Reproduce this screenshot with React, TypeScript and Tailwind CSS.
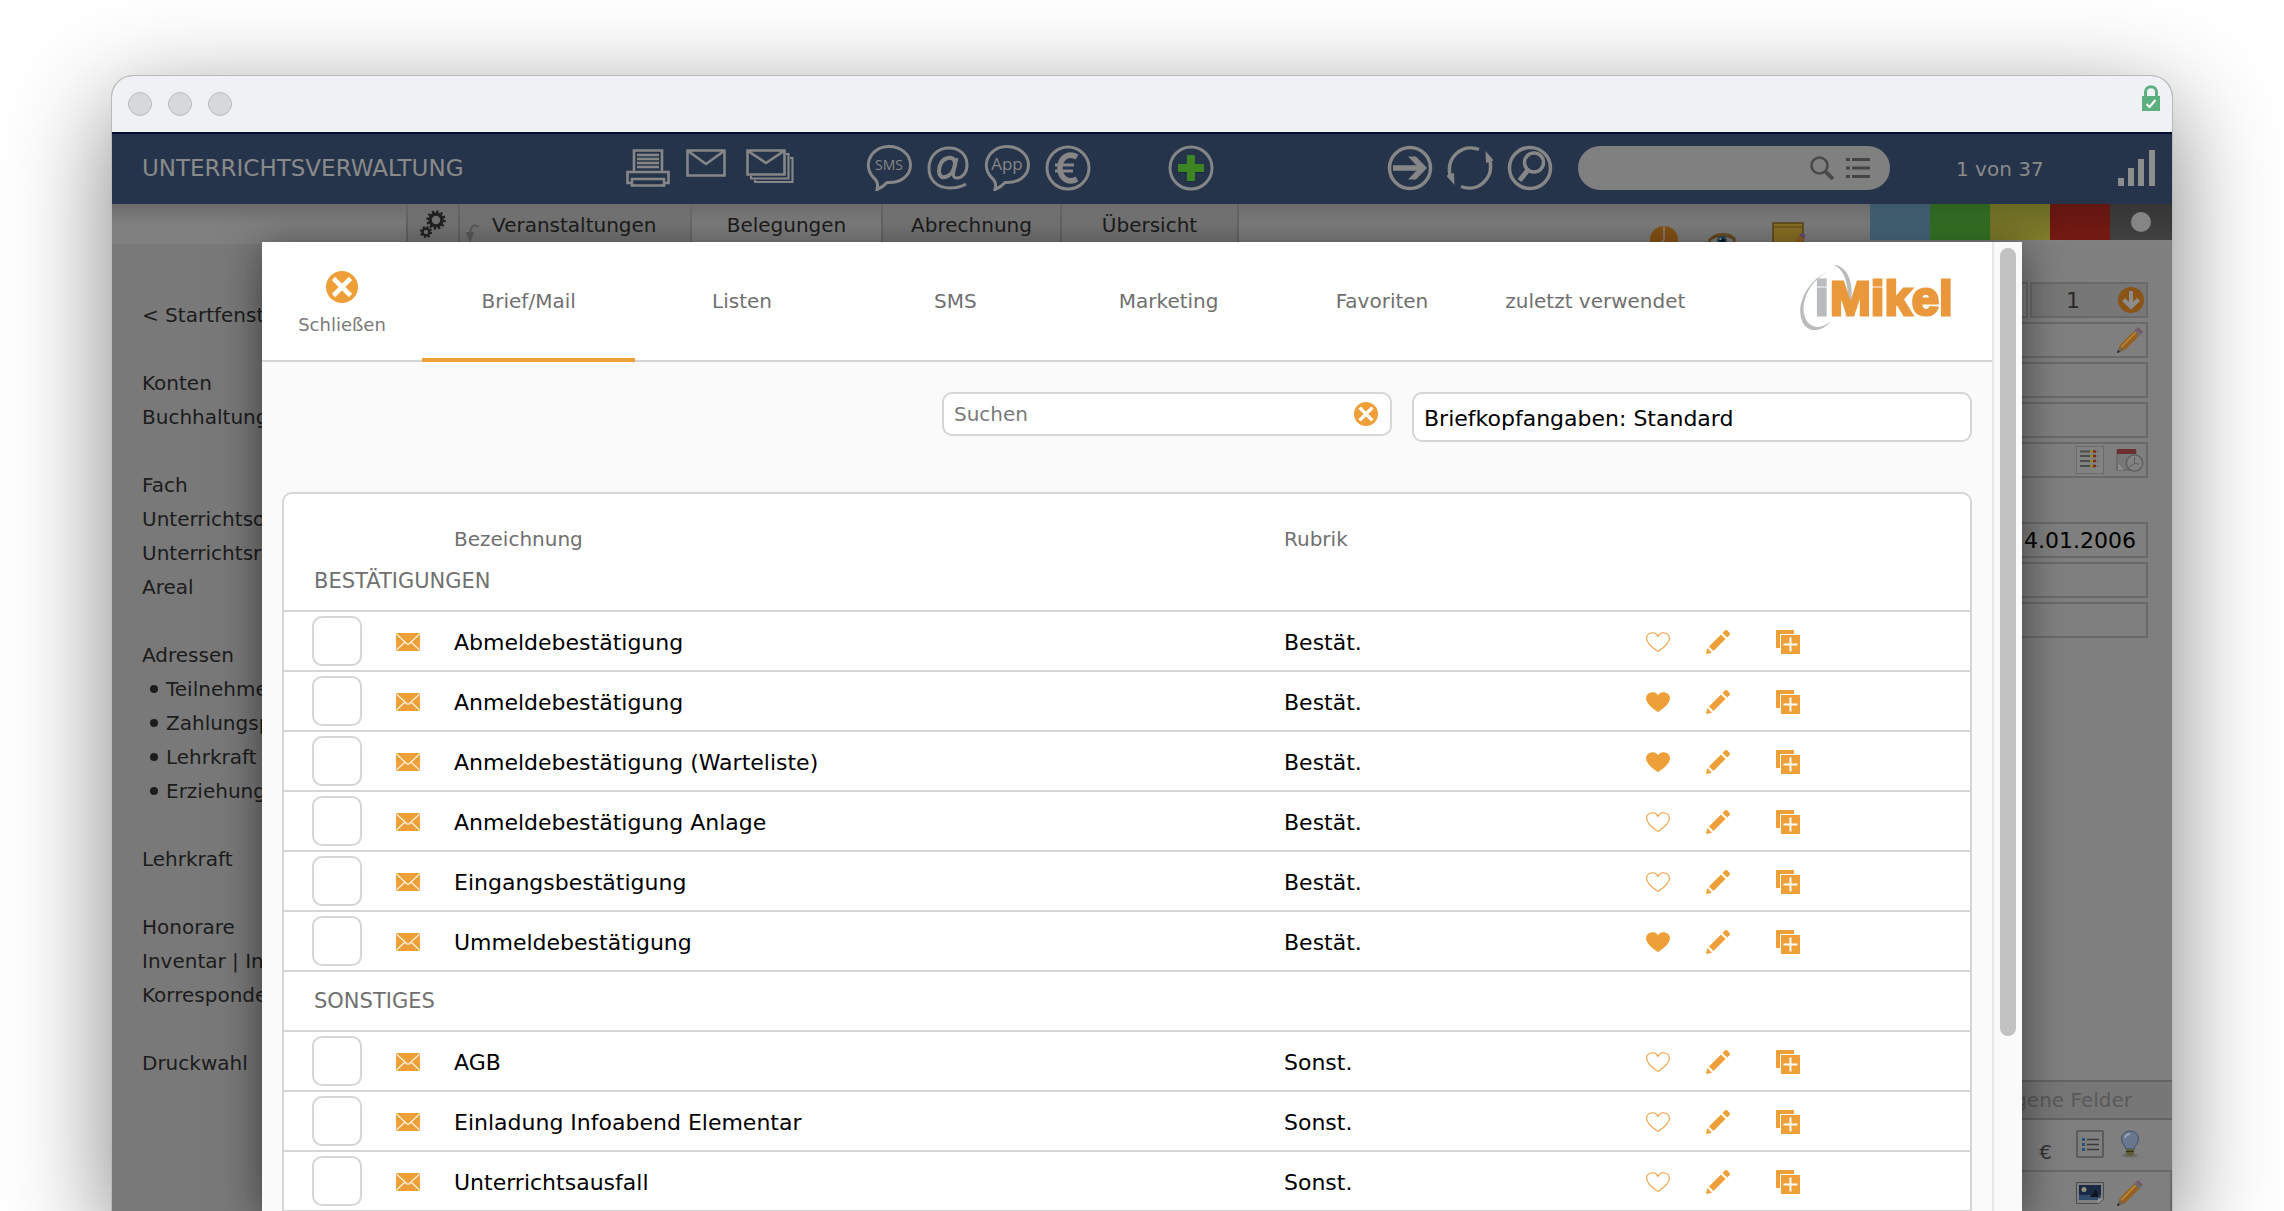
import React from "react";

const ORANGE = "#ee9f38";

function CloseIcon({ className }: { className: string }) {
  return (
    <svg viewBox="0 0 32 32" className={className} aria-hidden="true">
      <circle cx="16" cy="16" r="16" fill={ORANGE} />
      <path d="M7.500 7.500L24.500 24.500M24.500 7.500L7.500 24.500" stroke="#fff" strokeWidth="4.600" />
    </svg>
  );
}

function PrinterIcon() {
  return (
    <svg viewBox="0 0 44 38" className="h-[38px] w-11" fill="none" stroke="#868686" strokeWidth="2.600" aria-hidden="true">
      <path d="M8 22V1.500H36V22M11 6H33M11 10H33M11 14H33M11 18H33" />
      <path d="M6 23H1.500V34H6M38 34H42.500V23H6M6 30H38V36.500H6Z" />
    </svg>
  );
}

function MailIcon() {
  return (
    <svg viewBox="0 0 40 28" className="h-7 w-10" fill="none" stroke="#868686" strokeWidth="2.600" aria-hidden="true">
      <path d="M1.500 1.500H38.500V26.500H1.500ZM2 2L20 15L38 2" />
    </svg>
  );
}

function MailStackIcon() {
  return (
    <svg viewBox="0 0 48 34" className="h-[34px] w-12" fill="none" stroke="#868686" aria-hidden="true">
      <path d="M1.500 1.500H38.500V25.500H1.500ZM2 2L20 14L38 2" strokeWidth="2.600" />
      <path d="M5 27V29.500H42.500V5H40M9 31V33H46.500V9H44" strokeWidth="2.200" />
    </svg>
  );
}

function BubbleIcon({ label }: { label: string }) {
  return (
    <svg viewBox="0 0 46 46" className="size-[46px]" fill="none" stroke="#868686" strokeWidth="3" aria-hidden="true">
      <path d="M9.500 34.500C-5 22 4 1.500 23 1.500C35 1.500 44.500 9.500 44.500 20C44.500 31 34 38.500 21 37.500C18 41 15 43 11 44.500C12 41 11.500 37 9.500 34.500Z" />
      <text x="23" y="25" textAnchor="middle" fontSize={label === "SMS" ? 14 : 17} fontFamily="Open Sans, sans-serif" fill="#868686" stroke="none">
        {label}
      </text>
    </svg>
  );
}

function AtIcon() {
  return (
    <svg viewBox="0 0 42 44" className="h-11 w-[42px]" fill="none" stroke="#868686" strokeWidth="3" aria-hidden="true">
      <path d="M39 38C34 41 29 42 23 42C10 42 2 34 2 22C2 10 11 2 22 2C33 2 40 9 40 19C40 27 35 32 30 32C26 32 26 29 27 25L30 12" />
      <path d="M28 18C28 13 25 11 21 12C15 13 12 19 12 25C12 30 15 32 18 31C23 30 27 25 28 18Z" strokeWidth="4" />
    </svg>
  );
}

function EuroIcon() {
  return (
    <svg viewBox="0 0 46 46" className="size-[46px]" fill="none" stroke="#868686" aria-hidden="true">
      <circle cx="23" cy="23" r="21" strokeWidth="3" />
      <path d="M32 12C23 7 15 13 15 23C15 33 23 39 32 34" strokeWidth="5.500" />
      <path d="M10 20H29M10 26H28" strokeWidth="3" />
    </svg>
  );
}

function PlusIcon() {
  return (
    <svg viewBox="0 0 46 46" className="size-[46px]" aria-hidden="true">
      <circle cx="23" cy="23" r="21" fill="none" stroke="#868686" strokeWidth="3" />
      <path d="M19 11H27V20H36V28H27V37H19V28H10V20H19Z" fill="#1c2a35" />
      <path d="M19 10H27V19H36V27H27V36H19V27H10V19H19Z" fill="#3d8425" />
    </svg>
  );
}

function ArrowIcon() {
  return (
    <svg viewBox="0 0 46 46" className="size-[46px]" fill="none" stroke="#868686" aria-hidden="true">
      <circle cx="23" cy="23" r="20.500" strokeWidth="3.500" />
      <path d="M6 23H33" strokeWidth="5.500" />
      <path d="M21 11.500H29L40 23L29 34.500H21L32 23Z" fill="#868686" stroke="none" />
    </svg>
  );
}

function RefreshIcon() {
  return (
    <svg viewBox="0 0 46 46" className="size-[46px]" fill="none" stroke="#868686" strokeWidth="3.500" aria-hidden="true">
      <path d="M32 4.500C16 -2 -2 12 3.500 32" />
      <path d="M14 41.500C30 48 48 34 42.500 14" />
      <path d="M38.500 6L47 15.500L39 18Z" fill="#868686" stroke="none" />
      <path d="M7.500 40L-1 30.500L7 28Z" fill="#868686" stroke="none" />
    </svg>
  );
}

function FindIcon() {
  return (
    <svg viewBox="0 0 46 46" className="size-[46px]" fill="none" stroke="#868686" aria-hidden="true">
      <circle cx="23" cy="23" r="20.500" strokeWidth="3.500" />
      <circle cx="27" cy="17.500" r="9.500" strokeWidth="3.500" />
      <path d="M21 25L12.500 35.500" strokeWidth="5" />
    </svg>
  );
}

function SignalIcon() {
  return (
    <svg viewBox="0 0 38 36" className="h-9 w-[38px]" fill="#8d8d8d" aria-hidden="true">
      <path d="M0 28H6V36H0ZM10 18H16V36H10ZM20 9H26V36H20ZM31 0H37V36H31Z" />
    </svg>
  );
}

function LockIcon() {
  return (
    <svg viewBox="0 0 18 26" className="h-[26px] w-[18px]" aria-hidden="true">
      <path d="M3.500 13V7C3.500 0 14.500 0 14.500 7V13" fill="none" stroke="#5cb07f" strokeWidth="3" />
      <path d="M0 11H18V26H0Z" fill="#5cb07f" />
      <path d="M4.500 19L7.500 22L13.500 15" fill="none" stroke="#fff" strokeWidth="2" />
    </svg>
  );
}

function GearsIcon() {
  return (
    <svg viewBox="0 0 26 28" className="h-7 w-[26px]" fill="none" stroke="#222" aria-hidden="true">
      <circle cx="16" cy="10" r="6" strokeWidth="3.500" />
      <circle cx="16" cy="10" r="8.500" strokeWidth="2.500" strokeDasharray="2.200 2.250" />
      <circle cx="6" cy="22" r="3.500" strokeWidth="2.500" />
      <circle cx="6" cy="22" r="5.200" strokeWidth="1.800" strokeDasharray="2 2.080" />
    </svg>
  );
}

function EnvelopeIcon() {
  return (
    <svg viewBox="0 0 24 18" className="h-[18px] w-6" aria-hidden="true">
      <rect width="24" height="18" rx="1" fill={ORANGE} />
      <path d="M0.500 1L10.500 10.500Q12 12 13.500 10.500L23.500 1M0.500 17L9 9M23.500 17L15 9" fill="none" stroke="#fff3e0" strokeWidth="1.200" />
    </svg>
  );
}

function HeartIcon({ filled }: { filled: boolean }) {
  return (
    <svg viewBox="0 0 24 20" className="h-5 w-6" aria-hidden="true">
      <path
        d="M12 19.500C9 17.500 0.600 12 0.600 6.500C0.600 0 9.500 -1.200 12 4.500C14.500 -1.200 23.400 0 23.400 6.500C23.400 12 15 17.500 12 19.500Z"
        fill={filled ? ORANGE : "none"}
        stroke={ORANGE}
        strokeWidth="1.100"
      />
    </svg>
  );
}

function EditIcon() {
  return (
    <svg viewBox="0 0 24 24" className="size-6" fill={ORANGE} aria-hidden="true">
      <path d="M16.500 3L18.500 0.800Q20 -0.700 21.800 1L23.200 2.400Q24.600 4 23.200 5.500L21.200 7.600Z" />
      <path d="M15 4.500L19.500 9L7.500 21L3 16.500Z" />
      <path d="M1.300 18L6 22.700L0 24Z" />
    </svg>
  );
}

function CopyIcon() {
  return (
    <svg viewBox="0 0 24 24" className="size-6" aria-hidden="true">
      <path d="M0 0H18V4H4V18H0Z" fill={ORANGE} />
      <path d="M5 5H24V24H5Z" fill={ORANGE} />
      <path d="M14.500 7.500V21.500M7.500 14.500H21.500" stroke="#fff" strokeWidth="2" />
    </svg>
  );
}

function PencilColorIcon() {
  return (
    <svg viewBox="0 0 28 28" className="size-7" aria-hidden="true">
      <path d="M1 27L4 19L20 3L25 8L9 24Z" fill="#97601c" />
      <path d="M5.500 21L21 5" stroke="#b98d45" strokeWidth="1.500" />
      <path d="M1 27L3.500 20L8 24.500Z" fill="#6f6552" />
      <path d="M1 27L2 24L4 26Z" fill="#222" />
      <path d="M20 3L22 1L27 6L25 8Z" fill="#76566f" />
      <path d="M18 5L20 3L25 8L23 10Z" fill="#6c6c70" />
    </svg>
  );
}

function DownIcon() {
  return (
    <svg viewBox="0 0 26 26" className="size-[26px]" aria-hidden="true">
      <circle cx="13" cy="13" r="13" fill="#8a5416" />
      <path d="M13 4V20M5.500 12.500L13 20L20.500 12.500" fill="none" stroke="#8d8d8d" strokeWidth="4" />
    </svg>
  );
}

function BarsListIcon() {
  return (
    <svg viewBox="0 0 28 28" className="size-7" aria-hidden="true">
      <rect x="0.500" y="0.500" width="27" height="27" fill="#828282" stroke="#6b6b6b" />
      <path d="M4 5.500H14M4 10H14M4 15H14M4 20H14" stroke="#4c4c4c" strokeWidth="2" />
      <path d="M14 5.500H17M14 10H17M14 15H17M14 20H17" stroke="#918a26" strokeWidth="2.500" />
      <path d="M17 5.500H20M17 10H20M17 15H20M17 20H20" stroke="#7e2a20" strokeWidth="2.500" />
      <path d="M20 5.500H23M20 10H23M20 15H23M20 20H23" stroke="#6f6f6f" strokeWidth="1" />
    </svg>
  );
}

function CalendarClockIcon() {
  return (
    <svg viewBox="0 0 28 24" className="h-6 w-7" aria-hidden="true">
      <path d="M1 2H20V22H1Z" fill="#777" stroke="#5d5d5d" />
      <path d="M1 1H20V6H1Z" fill="#6b2f2f" />
      <path d="M2 15L8 22H2Z" fill="#8c8c8c" />
      <circle cx="18.500" cy="15" r="8.200" fill="#828282" stroke="#5c5c5c" strokeWidth="1.300" />
      <path d="M18.500 9V15.500L23 16M18.500 15.500L13 19" stroke="#5c5c5c" fill="none" />
    </svg>
  );
}

function ListBoxIcon() {
  return (
    <svg viewBox="0 0 28 28" className="size-7" aria-hidden="true">
      <rect x="1" y="1" width="26" height="26" rx="1" fill="#7f7f7f" stroke="#515151" strokeWidth="1.500" />
      <path d="M6 9.500H9M6 14.500H9M6 19.500H9" stroke="#285078" strokeWidth="3" />
      <path d="M11 9.500H23M11 14.500H23M11 19.500H23" stroke="#3a3a3a" strokeWidth="1.300" />
    </svg>
  );
}

function BulbIcon() {
  return (
    <svg viewBox="0 0 28 28" className="size-7" aria-hidden="true">
      <ellipse cx="14" cy="25.500" rx="8" ry="2" fill="#6c6c6c" />
      <path d="M10 19C10 16 5.500 14 5.500 9C5.500 -1.500 22.500 -1.500 22.500 9C22.500 14 18 16 18 19Z" fill="#68768e" stroke="#3f506c" />
      <path d="M9 8Q10 4 14 4" stroke="#9aa3b4" strokeWidth="2" fill="none" />
      <path d="M10 19H18V24L16 26H12L10 24Z" fill="#5d5d35" />
      <path d="M10 21.500H18" stroke="#33331d" />
    </svg>
  );
}

function PictureIcon() {
  return (
    <svg viewBox="0 0 28 22" className="h-[22px] w-7" aria-hidden="true">
      <path d="M0.500 0.500H27.500V17L23 21.500H0.500Z" fill="#808080" stroke="#4b4b4b" />
      <rect x="3" y="3" width="22" height="15" fill="#1b2945" />
      <path d="M3 13H25V18H3Z" fill="#324a6b" />
      <circle cx="8" cy="7.500" r="2.500" fill="#8f9180" />
      <path d="M14 15L20 7L23 15Z" fill="#11151d" />
      <path d="M27.500 16L22 16.500V21.500Z" fill="#999" />
    </svg>
  );
}

function ClockPieIcon() {
  return (
    <svg viewBox="0 0 28 28" className="size-7" aria-hidden="true">
      <circle cx="14" cy="14" r="14" fill="#8a5416" />
      <path d="M14 0V14L8 18" fill="none" stroke="#898989" strokeWidth="1.500" />
    </svg>
  );
}

function EyeIcon() {
  return (
    <svg viewBox="0 0 28 22" className="h-[22px] w-7" aria-hidden="true">
      <path d="M1 11Q7 6 14 6Q22 6 27 10Q21 18 13 18Q6 18 1 11Z" fill="#808080" stroke="#5a401c" strokeWidth="1.500" />
      <path d="M1 10Q7 4 14 4Q23 4 27 9" fill="none" stroke="#6d4b1e" strokeWidth="2" />
      <circle cx="14" cy="11" r="5" fill="#23485e" />
      <circle cx="14" cy="11" r="2.800" fill="#0d1518" />
      <circle cx="12.500" cy="9" r="1.200" fill="#8b9aa4" />
    </svg>
  );
}

function NoteIcon() {
  return (
    <svg viewBox="0 0 34 32" className="h-8 w-[34px]" aria-hidden="true">
      <path d="M1 1H31V31H1Z" fill="#8c7426" stroke="#5c431a" strokeWidth="1.500" />
      <path d="M2 5H30" stroke="#6e571d" strokeWidth="1.500" />
      <path d="M20 24L28 12L33 16L25 27Z" fill="#94601f" />
      <path d="M27 13L30 10.500L34 13.500L31.500 17Z" fill="#6b4f74" />
    </svg>
  );
}

function Logo() {
  return (
    <svg viewBox="0 0 154 70" className="h-[70px] w-[154px]" role="img" aria-label="iMikel">
      <path d="M29 8C11 13 -2 36 0.500 51C3 70 21 70 31 57C20 67 7 64 4 50C1 33 14 13 29 8Z" fill="#b9bbbd" />
      <path d="M33 1C48 1 54 20 51 37C50 44 48 50 45 54C50 38 50 6 33 1Z" fill="#b9bbbd" />
      <g fontSize="49" fontWeight="700" fontFamily="Liberation Sans, sans-serif" strokeWidth="3">
        <text x="15" y="51" fill="#b9bbbd" stroke="#b9bbbd">i</text>
        <text x="30" y="51" fill="#ea983c" stroke="#ea983c">Mikel</text>
      </g>
    </svg>
  );
}

const HEADER_BUTTON = "flex shrink-0 items-center justify-center";

function Toolbar() {
  return (
    <header className="flex h-[72px] shrink-0 items-center border-t-2 border-[#050f2b] bg-[#26344b] pb-0.5 text-[#8a8a8a]">
      <h1 className="w-[514px] shrink-0 pl-[30px] text-[23px]">UNTERRICHTSVERWALTUNG</h1>
      <div className="flex w-[240px] shrink-0 items-start gap-4">
        <button aria-label="Drucken" className={HEADER_BUTTON}><PrinterIcon /></button>
        <button aria-label="E-Mail" className={HEADER_BUTTON}><MailIcon /></button>
        <button aria-label="Serienmail" className={HEADER_BUTTON + " ml-1"}><MailStackIcon /></button>
      </div>
      <div className="flex w-[302px] shrink-0 items-center gap-[15px]">
        <button aria-label="SMS senden" className={HEADER_BUTTON}><BubbleIcon label="SMS" /></button>
        <button aria-label="Adresse" className={HEADER_BUTTON}><AtIcon /></button>
        <button aria-label="App-Nachricht" className={HEADER_BUTTON}><BubbleIcon label="App" /></button>
        <button aria-label="Zahlung" className={HEADER_BUTTON}><EuroIcon /></button>
      </div>
      <button aria-label="Neu" className={HEADER_BUTTON}><PlusIcon /></button>
      <div className="ml-auto flex shrink-0 items-center gap-[14px]">
        <button aria-label="Weiter" className={HEADER_BUTTON}><ArrowIcon /></button>
        <button aria-label="Aktualisieren" className={HEADER_BUTTON}><RefreshIcon /></button>
        <button aria-label="Suchen" className={HEADER_BUTTON}><FindIcon /></button>
      </div>
      <label className="ml-[25px] flex h-11 w-[312px] shrink-0 items-center gap-3 rounded-full bg-[#808080] pr-5 pl-5">
        <input aria-label="Schnellsuche" className="min-w-0 flex-1 bg-transparent outline-none" />
        <svg viewBox="0 0 24 24" className="size-6" fill="none" stroke="#494949" aria-hidden="true">
          <circle cx="9.500" cy="9.500" r="8" strokeWidth="2.600" />
          <path d="M15 15L23 23" strokeWidth="4" />
        </svg>
        <svg viewBox="0 0 24 24" className="size-6" stroke="#444" strokeWidth="3" aria-hidden="true">
          <path d="M0 3.500H4M0 12H4M0 20.500H4M6 3.500H24M6 12H24M6 20.500H24" />
        </svg>
      </label>
      <span className="w-[228px] shrink-0 pt-0.5 pl-[66px] text-xl whitespace-nowrap">1 von 37</span>
      <span className="w-[54px] shrink-0"><SignalIcon /></span>
    </header>
  );
}

function TabStrip() {
  return (
    <div className="flex h-10 shrink-0 bg-gradient-to-b from-[#6c6c6c] to-[#808080] to-50% text-xl text-[#1c1c1c]">
      <div className="w-[294px] shrink-0" />
      <button aria-label="Einstellungen" className="flex w-[52px] shrink-0 justify-center border-l-2 border-[#666] bg-[#727272]/60 pt-1.5">
        <GearsIcon />
      </button>
      <nav className="flex">
        <button className="flex w-[232px] items-center gap-3 border-l-2 border-[#666] bg-[#727272]/60 pt-0.5 pl-1.5 text-left">
          <svg viewBox="0 0 14 20" className="mt-4 h-5 w-3.5" aria-hidden="true">
            <path d="M13 4Q5 -1 4 11" fill="none" stroke="#5b5b5b" strokeWidth="2" />
            <path d="M0 9H8L4 20Z" fill="#5b5b5b" />
          </svg>
          Veranstaltungen
        </button>
        <button className="w-[191px] border-l-2 border-[#6b6b6b] pt-0.5">Belegungen</button>
        <button className="w-[179px] border-l-2 border-[#666] bg-[#727272]/60 pt-0.5">Abrechnung</button>
        <button className="w-[179px] border-x-2 border-[#666] bg-[#727272]/60 pt-0.5">Übersicht</button>
      </nav>
      <div className="ml-auto flex w-[220px] shrink-0 items-start gap-[30px] pt-[22px]">
        <ClockPieIcon />
        <span className="pt-1"><EyeIcon /></span>
        <span className="-mt-1 ml-1.5"><NoteIcon /></span>
      </div>
      <div className="flex h-9">
        <span className="w-[60px] bg-gradient-to-b from-[#3e5a6c] to-[#496b7f]" />
        <span className="w-[60px] bg-gradient-to-b from-[#2e6420] to-[#387a26]" />
        <span className="w-[60px] bg-gradient-to-b from-[#6c6b26] to-[#817f2a]" />
        <span className="w-[60px] bg-gradient-to-b from-[#621610] to-[#751a13]" />
        <span className="flex w-[62px] items-center justify-center bg-gradient-to-b from-[#353535] to-[#404040]">
          <span className="size-5 rounded-full bg-[#858585]" />
        </span>
      </div>
    </div>
  );
}

const NAV: { text: string; sub?: boolean }[] = [
  { text: "< Startfenster" },
  { text: "" },
  { text: "Konten" },
  { text: "Buchhaltung" },
  { text: "" },
  { text: "Fach" },
  { text: "Unterrichtsorte" },
  { text: "Unterrichtsräume" },
  { text: "Areal" },
  { text: "" },
  { text: "Adressen" },
  { text: "Teilnehmer", sub: true },
  { text: "Zahlungspfl.", sub: true },
  { text: "Lehrkraft", sub: true },
  { text: "Erziehungsber.", sub: true },
  { text: "" },
  { text: "Lehrkraft" },
  { text: "" },
  { text: "Honorare" },
  { text: "Inventar | Instr." },
  { text: "Korrespondenz" },
  { text: "" },
  { text: "Druckwahl" },
];

function SideNav() {
  return (
    <nav className="w-60 shrink-0 bg-[#797979] pt-[54px] pl-[30px]">
      <ul className="text-xl leading-[34px] whitespace-nowrap text-[#1c1c1c]">
        {NAV.map((item, i) => (
          <li key={i} className="flex h-[34px] items-center">
            {item.sub && <span className="mr-2 ml-2 size-2 shrink-0 rounded-full bg-[#1c1c1c]" />}
            {item.text && <a href="#">{item.text}</a>}
          </li>
        ))}
      </ul>
    </nav>
  );
}

const FIELD = "flex h-9 items-center justify-end border-2 border-[#6a6a6a] px-0.5";

function DetailPanel() {
  return (
    <aside className="flex w-[300px] shrink-0 flex-col text-[22px]">
      <div className="flex flex-col gap-1 pt-[38px] pr-6">
        <div className="flex gap-0.5">
          <div className={FIELD + " flex-1"} />
          <div className={FIELD + " w-[118px] gap-[38px] bg-[#777] text-[22px] text-[#2a2a2a]"}>
            1<DownIcon />
          </div>
        </div>
        <div className={FIELD}><PencilColorIcon /></div>
        <div className={FIELD} />
        <div className={FIELD} />
        <div className={FIELD + " gap-3"}><BarsListIcon /><CalendarClockIcon /></div>
        <div className="h-9" />
        <div className={FIELD + " pr-2.5 text-black"}>24.01.2006</div>
        <div className={FIELD} />
        <div className={FIELD} />
      </div>
      <div className="mt-[442px] flex h-[40px] shrink-0 items-center justify-end border-y-2 border-[#646464] bg-[#777] pr-10 text-xl text-[#5a5a5a]">
        Eigene Felder
      </div>
      <div className="flex h-[50px] shrink-0 items-center justify-end pr-7 pb-0.5 text-xl text-[#333]">
        <span className="mt-4 mr-6">€</span>
        <ListBoxIcon />
        <span className="ml-3"><BulbIcon /></span>
      </div>
      <div className="flex h-[43px] shrink-0 items-center justify-end gap-3 border-2 border-b-0 border-[#6a6a6a] pr-[26px]">
        <PictureIcon />
        <PencilColorIcon />
      </div>
    </aside>
  );
}

type Entry = { name: string; tag: string; fav: boolean };

const GROUPS: { title: string; rows: Entry[] }[] = [
  {
    title: "BESTÄTIGUNGEN",
    rows: [
      { name: "Abmeldebestätigung", tag: "Bestät.", fav: false },
      { name: "Anmeldebestätigung", tag: "Bestät.", fav: true },
      { name: "Anmeldebestätigung (Warteliste)", tag: "Bestät.", fav: true },
      { name: "Anmeldebestätigung Anlage", tag: "Bestät.", fav: false },
      { name: "Eingangsbestätigung", tag: "Bestät.", fav: false },
      { name: "Ummeldebestätigung", tag: "Bestät.", fav: true },
    ],
  },
  {
    title: "SONSTIGES",
    rows: [
      { name: "AGB", tag: "Sonst.", fav: false },
      { name: "Einladung Infoabend Elementar", tag: "Sonst.", fav: false },
      { name: "Unterrichtsausfall", tag: "Sonst.", fav: false },
    ],
  },
];

function EntryRow({ entry }: { entry: Entry }) {
  return (
    <tr className="h-[60px] border-t-2 border-[#d5d5d5] text-[22px] text-black">
      <td className="pl-7">
        <input
          type="checkbox"
          aria-label={entry.name}
          className="block size-[50px] appearance-none rounded-[10px] border-2 border-[#d5d5d5] bg-white"
        />
      </td>
      <td className="pt-0.5"><EnvelopeIcon /></td>
      <td className="pt-0.5">{entry.name}</td>
      <td className="pt-0.5">{entry.tag}</td>
      <td className="pt-0.5">
        <button aria-label="Favorit" className="block"><HeartIcon filled={entry.fav} /></button>
      </td>
      <td className="pt-0.5">
        <button aria-label="Bearbeiten" className="block"><EditIcon /></button>
      </td>
      <td className="pt-0.5">
        <button aria-label="Duplizieren" className="block"><CopyIcon /></button>
      </td>
    </tr>
  );
}

function EntryTable() {
  return (
    <div className="mx-5 mt-[50px] overflow-hidden rounded-t-[10px] border-2 border-b-0 border-[#d5d5d5] bg-white">
      <table className="w-full table-fixed border-collapse text-left">
        <colgroup>
          <col className="w-28" />
          <col className="w-[58px]" />
          <col />
          <col className="w-[362px]" />
          <col className="w-[60px]" />
          <col className="w-[70px]" />
          <col className="w-[194px]" />
        </colgroup>
        <thead>
          <tr className="h-[66px] text-xl text-[#707070]">
            <th colSpan={2} />
            <th className="pt-6 font-normal">Bezeichnung</th>
            <th className="pt-6 font-normal">Rubrik</th>
            <th colSpan={3} />
          </tr>
        </thead>
        {GROUPS.map((group, i) => (
          <tbody key={group.title}>
            <tr className={i === 0 ? "h-[51px]" : "h-[60px] border-t-2 border-[#d5d5d5]"}>
              <th colSpan={7} className={i === 0 ? "pb-1.5 pl-[30px] text-[21px] font-normal text-[#707070]" : "pt-0.5 pl-[30px] text-[21px] font-normal text-[#707070]"}>
                {group.title}
              </th>
            </tr>
            {group.rows.map((entry) => (
              <EntryRow key={entry.name} entry={entry} />
            ))}
          </tbody>
        ))}
        <tfoot>
          <tr className="border-t-2 border-[#d5d5d5]"><td colSpan={7} className="h-10" /></tr>
        </tfoot>
      </table>
    </div>
  );
}

const TABS = ["Brief/Mail", "Listen", "SMS", "Marketing", "Favoriten", "zuletzt verwendet"];

function PrintDialog() {
  return (
    <section
      role="dialog"
      aria-label="Druckwahl"
      className="absolute top-[38px] right-[150px] bottom-0 left-[150px] flex bg-[#fafafa] shadow-[0_6px_40px_rgba(0,0,0,0.5)]"
    >
      <div className="min-w-0 flex-1">
        <div className="flex h-[120px] items-stretch border-b-2 border-[#d5d5d5] bg-white text-[#707070]">
          <button className="flex w-40 shrink-0 flex-col items-center gap-2.5 pt-[29px] text-lg leading-6 text-[#7a7a7a]">
            <CloseIcon className="size-8" />
            Schließen
          </button>
          <nav className="-mb-0.5 grid w-[1280px] shrink grid-cols-6">
            {TABS.map((tab, i) => (
              <button
                key={tab}
                className={
                  i === 0
                    ? "border-b-4 border-[#ee9f38] pt-0.5 text-xl whitespace-nowrap"
                    : "border-b-4 border-transparent pt-0.5 text-xl whitespace-nowrap"
                }
              >
                {tab}
              </button>
            ))}
          </nav>
          <div className="ml-auto shrink-0 pt-[22px] pr-[38px]">
            <Logo />
          </div>
        </div>
        <div className="mt-[30px] flex items-start justify-end gap-5 pr-5">
          <label className="flex h-11 w-[450px] items-center rounded-[10px] border-2 border-[#d5d5d5] bg-white pr-3 pl-2.5">
            <input
              placeholder="Suchen"
              aria-label="Suchen"
              className="min-w-0 flex-1 text-xl outline-none placeholder:text-[#7a7a7a]"
            />
            <button aria-label="Suche leeren"><CloseIcon className="size-6" /></button>
          </label>
          <select
            aria-label="Briefkopfangaben"
            className="h-[50px] w-[560px] appearance-none rounded-[10px] border-2 border-[#d5d5d5] bg-white px-2.5 pt-0.5 text-[22px] text-black"
          >
            <option>Briefkopfangaben: Standard</option>
          </select>
        </div>
        <EntryTable />
      </div>
      <div className="w-[30px] shrink-0 border-l-2 border-[#e8e8e8] bg-[#fafafa] pt-1.5 pl-1.5">
        <div className="h-[788px] w-4 rounded-full bg-[#c2c2c2]" />
      </div>
    </section>
  );
}

export default function App() {
  return (
    <div className="h-screen overflow-hidden bg-white px-[111px] pt-[75px] font-['Verdana','DejaVu_Sans',sans-serif]">
      <div className="flex min-h-full flex-col overflow-hidden rounded-t-[22px] border border-b-0 border-[#b9b9b9] bg-[#7f7f7f] shadow-[0_30px_100px_rgba(0,0,0,0.5)]">
        <div className="flex h-14 shrink-0 items-center gap-4 bg-[#f0f1f4] pr-3 pl-4">
          <span className="size-6 rounded-full border border-[#bcbcbe] bg-[#d7d8da]" />
          <span className="size-6 rounded-full border border-[#bcbcbe] bg-[#d7d8da]" />
          <span className="size-6 rounded-full border border-[#bcbcbe] bg-[#d7d8da]" />
          <span className="mb-3 ml-auto"><LockIcon /></span>
        </div>
        <Toolbar />
        <main className="relative flex flex-1 flex-col overflow-hidden">
          <TabStrip />
          <div className="flex flex-1 justify-between">
            <SideNav />
            <DetailPanel />
          </div>
          <PrintDialog />
        </main>
      </div>
    </div>
  );
}
